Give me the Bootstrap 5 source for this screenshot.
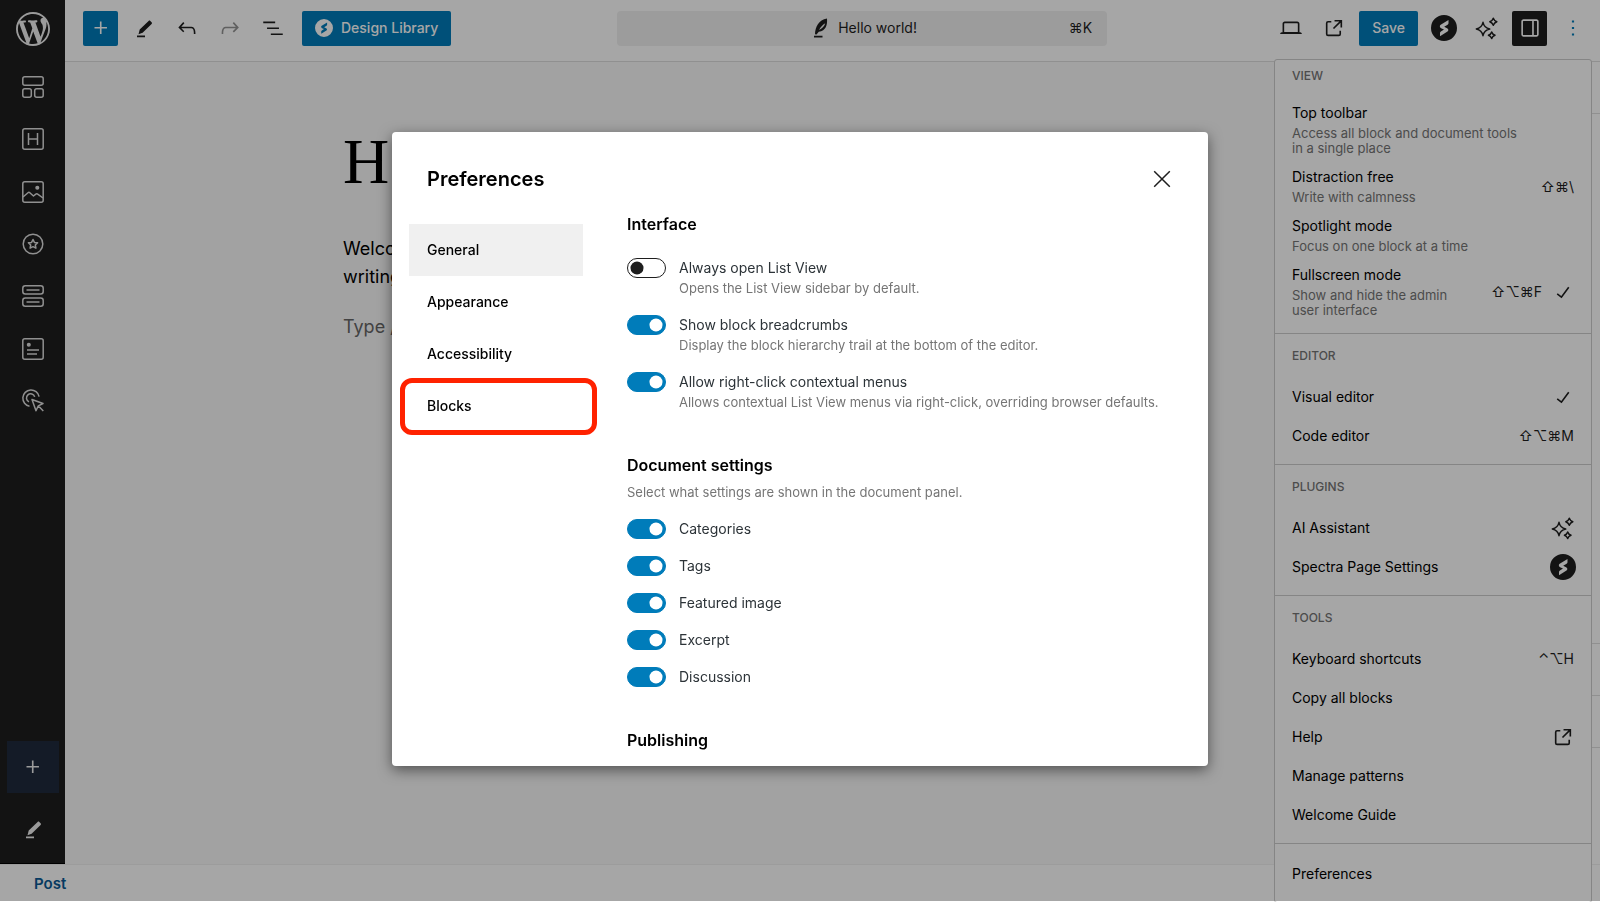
<!DOCTYPE html>
<html lang="en">
<head>
<meta charset="utf-8">
<meta name="viewport" content="width=device-width, initial-scale=1">
<title>Hello world! – Editor</title>
<link rel="stylesheet" href="https://cdn.jsdelivr.net/npm/bootstrap@5.3.0/dist/css/bootstrap.min.css">
<style>
  :root { --accent: #007cba; --ink: #1e1e1e; --line: #ddd; }
  body { font-family: Inter, "Liberation Sans", sans-serif; font-size: 14px; line-height: 20px; color: #000; overflow: hidden; }
  svg { fill: currentColor; flex: none; display: block; }
  .ico { width: 26px; height: 26px; }
  .stroked { fill: none; stroke: currentColor; stroke-width: 1.5; stroke-linejoin: round; }
  .plain { border: 0; background: none; padding: 0; color: var(--ink); display: flex; align-items: center; justify-content: center; }

  /* left rail */
  .workspace { min-height: 0; }
  .rail { width: 65px; background: var(--ink); border-bottom: 1px solid #000; }
  .rail .plain { color: #eee; width: 52px; }
  .rail .logo { height: 61px; padding-bottom: 4px; }
  .rail-tools { height: 366px; }
  .rail-tools .plain { flex: 1; color: #ddd; }
  .rail .add { height: 52px; background: #1f2a3d; }
  .rail .draw { height: 70px; padding-top: 2px; }

  /* top bar */
  .topbar { height: 62px; border-bottom: 1px solid var(--line); padding: 0 10px 5px 18px; }
  .topbar .plain { width: 35px; height: 35px; border-radius: 2px; }
  .topbar .fill { background: var(--accent); color: #fff; }
  .topbar .fill.wide { width: auto; font-weight: 500; padding: 0 13px; }
  .topbar .dark { background: var(--ink); color: #fff; }
  .topbar .off { color: #949494; }
  .topbar .more { color: var(--accent); }
  .command { width: 490px; height: 35px; background: #f0f0f0; border-radius: 4px; padding: 0 15px; border: 0; color: var(--ink); }

  /* canvas */
  .canvas { background: #f9f9f9; padding: 64px 278px 0; }
  .canvas h1 { font: 400 64px/72px "Liberation Serif", serif; margin: 0 0 37px; }
  .canvas p { font-size: 18px; line-height: 28px; margin: 0 0 22px; }
  .canvas .hint { color: #666; }
  .settings { width: 306px; border-left: 1px solid var(--line); }
  .settings div { border-bottom: 1px solid var(--line); height: 52px; }
  .settings .tall { height: 530px; }
  .crumbs { height: 38px; border-top: 1px solid #f0f0f0; padding: 0 34px; }
  .crumbs a { color: #0a5a96; font-weight: 600; font-size: 15px; text-decoration: none; }

  /* options menu */
  .options { position: absolute; top: 59px; right: 8px; width: 318px; background: #fff; border: 1px solid #ccc; border-radius: 3px; }
  .options section { padding: 9px 0; border-bottom: 1px solid #ccc; }
  .options section:first-child { padding-top: 3px; }
  .options section:last-child { border: 0; padding-top: 10px; }
  .options h2 { font-size: 12px; font-weight: 500; line-height: 26px; margin: 0 0 8px; padding-left: 17px; color: #757575; }
  .options section:first-child h2 { margin-bottom: 9px; }
  .options button { width: 100%; min-height: 39px; border: 0; background: none; color: #000; padding: 0 17px; text-align: left; display: flex; align-items: center; gap: 8px; }
  .options .two { padding-top: 6px; padding-bottom: 6px; }
  .options .two b { display: block; font-size: 14px; font-weight: 400; line-height: 18px; margin-bottom: 4px; }
  .options .two span { display: block; font-size: 13px; line-height: 15px; }
  .options .two span span { color: #757575; }
  .options kbd { background: none; color: var(--ink); padding: 0; font: inherit; margin-left: auto; white-space: nowrap; }
  .options svg { margin: 0 -2px 0 auto; color: var(--ink); }
  .options kbd + svg { margin-left: 0; }
  .narrow { width: 170px; }

  /* preferences dialog */
  .modal-backdrop.dim { --bs-backdrop-opacity: .35; height: calc(100vh - 1px); }
  .prefs { max-width: 816px; height: calc(100vh - 268px); margin: 132px auto 0; }
  .prefs .modal-content { height: 100%; border: 0; border-radius: 4px; overflow: hidden; box-shadow: 0 4px 14px rgba(0,0,0,.5); }
  .prefs .modal-header { height: 80px; padding: 13px 33px 0 35px; border: 0; flex: none; }
  .prefs .modal-title { font-size: 20px; font-weight: 600; line-height: 24px; }
  .prefs .modal-body { padding: 0 40px 0 17px; display: flex; gap: 44px; overflow: hidden; }
  .tabs { width: 174px; margin-top: 12px; flex: none; }
  .tabs button { display: block; width: 100%; height: 52px; border: 0; background: none; color: #000; text-align: left; padding: 0 18px; font-weight: 500; position: relative; }
  .tabs .active { background: #f0f0f0; }
  .tabs .marked::after { content: ""; position: absolute; inset: -2px -14px -3px -9px; border: 5px solid #ff2200; border-radius: 12px; }
  .panel h2 { font-size: 16px; font-weight: 600; line-height: 24px; margin: 0; }
  .panel section { margin-bottom: 41px; }
  .panel .note { color: #757575; font-size: 13px; line-height: 20px; margin: 0; }
  .panel .form-switch { min-height: 0; margin: 0 0 17px; padding-left: 52px; color: #2c3338; }
  .panel .first { margin-top: 22px; }
  .panel h2 + .note { margin: 5px 0 17px; }
  .panel .form-switch .form-check-input { width: 39px; height: 20px; margin: 0 0 0 -52px; border-color: var(--ink);
    background-image: url("data:image/svg+xml,%3csvg xmlns='http://www.w3.org/2000/svg' viewBox='-4 -4 8 8'%3e%3ccircle r='2.9' fill='%231e1e1e'/%3e%3c/svg%3e"); }
  .panel .form-switch .form-check-input:checked { background-color: var(--accent); border-color: var(--accent);
    background-image: url("data:image/svg+xml,%3csvg xmlns='http://www.w3.org/2000/svg' viewBox='-4 -4 8 8'%3e%3ccircle r='2.9' fill='%23fff'/%3e%3c/svg%3e"); }
</style>
</head>
<body class="vh-100 d-flex flex-column">

<svg width="0" height="0" class="position-absolute" aria-hidden="true">
  <symbol id="plus" viewBox="0 0 24 24"><path d="M11 12.5V17.5H12.5V12.5H17.5V11H12.5V6H11V11H6V12.5H11Z"/></symbol>
  <symbol id="pencil" viewBox="0 0 26 26"><path d="M7.5 19.2l1.2-4.6 8.900-8.700c.6-.5 1.200-.5 1.700 0l1.300 1.300c.5.5.5 1.200 0 1.700l-9 8.800zM6 20.600h8v1.600H6z"/></symbol>
  <symbol id="external" viewBox="0 0 24 24"><path d="M19.500 4.500h-7V6h4.440l-5.970 5.970 1.060 1.060L18 7.060v4.440h1.500v-7Zm-13 1a2 2 0 0 0-2 2v10a2 2 0 0 0 2 2h10a2 2 0 0 0 2-2v-3H17v3a.5.5 0 0 1-.5.5h-10a.5.5 0 0 1-.5-.5v-10a.5.5 0 0 1 .5-.5h3V5.500h-3Z"/></symbol>
  <symbol id="check" viewBox="0 0 24 24"><path d="M16.700 7.100l-6.300 8.500-3.300-2.500-.9 1.200 4.500 3.400L17.900 8z"/></symbol>
  <symbol id="spectra" viewBox="0 0 26 26"><path fill-rule="evenodd" d="M13 0a13 13 0 1 0 0 26a13 13 0 1 0 0-26zM17.500 5v3.200c0 .7-.3 1.100-.9 1.500l-3.400 2.100 2.900 1.400c1.500.8 1.700 2.400.4 3.400L9 21.300v-3.200c0-.7.3-1.100.9-1.500l3.100-2-2.900-1.400c-1.500-.8-1.700-2.400-.4-3.400z"/></symbol>
  <symbol id="sparkle" viewBox="0 0 26 26"><g fill="none" stroke="currentColor" stroke-width="1.500" stroke-linejoin="round"><path d="M9 7.300q1.200 5.500 6.700 6.700q-5.500 1.200-6.700 6.700q-1.200-5.500-6.700-6.700q5.500-1.200 6.700-6.700z"/><path d="M19.300 3.200q.9 2.600 3.500 3.500q-2.600.9-3.500 3.500q-.9-2.600-3.500-3.500q2.600-.9 3.500-3.500zM17.700 17q.8 2.500 3.300 3.300q-2.500.8-3.300 3.300q-.8-2.500-3.300-3.300q2.500-.8 3.300-3.300z"/></g></symbol>
</svg>

<div class="workspace d-flex flex-fill">
  <nav class="rail d-flex flex-column align-items-center" aria-label="Block tools">
    <button class="plain logo" aria-label="Dashboard"><svg width="34" height="34" viewBox="0 0 20 20"><path d="M20 10c0-5.510-4.490-10-10-10C4.480 0 0 4.490 0 10c0 5.520 4.480 10 10 10 5.510 0 10-4.480 10-10zM7.780 15.370L4.370 6.220c.55-.02 1.170-.08 1.170-.08.5-.06.44-1.130-.06-1.110 0 0-1.450.11-2.370.11-.18 0-.37 0-.58-.01C4.120 2.690 6.870 1.110 10 1.110c2.330 0 4.450.87 6.050 2.340-.68-.11-1.650.39-1.650 1.580 0 .74.45 1.360.9 2.100.35.61.55 1.360.55 2.460 0 1.490-1.400 5-1.400 5l-3.030-8.370c.54-.02.82-.17.82-.17.5-.05.44-1.250-.06-1.220 0 0-1.440.12-2.380.12-.87 0-2.330-.12-2.330-.12-.5-.03-.56 1.200-.06 1.220l.92.08 1.260 3.410zM17.410 10c.24-.64.74-1.870.43-4.250.7 1.290 1.050 2.710 1.050 4.250 0 3.290-1.730 6.240-4.400 7.780.97-2.590 1.940-5.200 2.920-7.780zM6.100 18.090C3.120 16.650 1.110 13.530 1.110 10c0-1.300.23-2.480.72-3.590C3.250 10.300 4.670 14.200 6.100 18.090zm4.030-6.630l2.580 6.980c-.86.29-1.760.45-2.710.45-.79 0-1.570-.11-2.290-.33.81-2.380 1.620-4.740 2.420-7.100z"/></svg></button>
    <div class="rail-tools d-flex flex-column">
      <button class="plain" aria-label="Container"><svg class="ico stroked" viewBox="0 0 26 26"><rect x="2.800" y="2.800" width="20.400" height="8.500" rx="2"/><rect x="2.800" y="14.800" width="8.500" height="8.500" rx="2"/><rect x="14.700" y="14.800" width="8.500" height="8.500" rx="2"/></svg></button>
      <button class="plain" aria-label="Heading"><svg class="ico stroked" viewBox="0 0 26 26"><rect x="2.800" y="2.800" width="20.400" height="20.400" rx="2"/><path d="M8.500 7v12M17.500 7v12M8.500 13h9"/></svg></button>
      <button class="plain" aria-label="Image"><svg class="ico stroked" viewBox="0 0 26 26"><rect x="2.800" y="2.800" width="20.400" height="20.400" rx="2"/><path d="M3 18l5-4.300c.6-.5 1.200-.5 1.800 0l3.700 3.300 2.300-1.800c.7-.5 1.300-.5 1.900 0L23 19"/><circle cx="17.300" cy="8.700" r="1.300" fill="currentColor"/></svg></button>
      <button class="plain" aria-label="Icon"><svg class="ico stroked" viewBox="0 0 26 26"><circle cx="13" cy="13" r="9.800"/><path d="M13 8.500l1.400 2.900 3.200.4-2.300 2.200.6 3.200-2.900-1.500-2.900 1.500.6-3.200-2.300-2.200 3.200-.4z"/></svg></button>
      <button class="plain" aria-label="Buttons"><svg class="ico stroked" viewBox="0 0 26 26"><rect x="2.800" y="2.800" width="20.400" height="8.300" rx="2.500"/><rect x="2.800" y="14.900" width="20.400" height="8.300" rx="2.500"/><path d="M6.500 7h13M6.500 19h13"/></svg></button>
      <button class="plain" aria-label="Info box"><svg class="ico stroked" viewBox="0 0 26 26"><rect x="2.800" y="2.800" width="20.400" height="20.400" rx="2"/><circle cx="8.800" cy="8.800" r="1.300" fill="currentColor"/><path d="M7 14h12M7 18h10"/></svg></button>
      <button class="plain" aria-label="Call to action"><svg class="ico stroked" viewBox="0 0 26 26"><path d="M9.500 18.200a8.200 8.200 0 1 1 9.600-9.600M9 13.900a4.200 4.200 0 1 1 5.700-5M12 11.500l11 4-4.700 2.300-2.300 4.900zM18.500 18l4.800 5"/></svg></button>
    </div>
    <button class="plain add mt-auto" aria-label="Add block"><svg class="ico"><use href="#plus"/></svg></button>
    <button class="plain draw" aria-label="Edit"><svg class="ico"><use href="#pencil"/></svg></button>
  </nav>

  <div class="flex-fill d-flex flex-column">
    <header class="topbar d-flex align-items-center justify-content-between">
      <div class="d-flex align-items-center gap-2">
        <button class="plain fill" aria-label="Toggle block inserter"><svg class="ico"><use href="#plus"/></svg></button>
        <button class="plain" aria-label="Tools"><svg class="ico"><use href="#pencil"/></svg></button>
        <button class="plain" aria-label="Undo"><svg class="ico" viewBox="0 0 24 24"><path d="M18.300 11.700c-.6-.6-1.400-.9-2.300-.9H6.700l2.900-3.300-1.100-1-4.500 5L8.500 16l1-1-2.700-2.700H16c.5 0 .9.2 1.300.5 1 1 1 3.400 1 4.500v.3h1.500v-.2c0-1.500 0-4.300-1.500-5.700z"/></svg></button>
        <button class="plain off" aria-label="Redo"><svg class="ico" viewBox="0 0 24 24"><path d="M15.600 6.500l-1.100 1 2.900 3.300H8c-.9 0-1.700.3-2.300.9-1.400 1.500-1.400 4.200-1.400 5.600v.2h1.500v-.3c0-1.100 0-3.500 1-4.500.3-.3.7-.5 1.300-.5h9.200L14.500 15l1.100 1.100 4.600-4.600-4.600-5z"/></svg></button>
        <button class="plain" aria-label="Document overview"><svg class="ico" viewBox="0 0 24 24"><path d="M3 6h11v1.500H3V6Zm3.500 5.500h11V13h-11v-1.500ZM21 17H10v1.500h11V17Z"/></svg></button>
        <button class="plain fill wide gap-2 ms-1"><svg width="18" height="18"><use href="#spectra"/></svg>Design Library</button>
      </div>
      <button class="command d-flex align-items-center">
        <span class="flex-fill d-flex align-items-center justify-content-center gap-1 ps-4">
          <svg class="ico" viewBox="0 0 26 26"><path fill-rule="evenodd" d="M7 19.300C7.200 12 10.500 5 19 3.500c.5 6.500-1 12.300-8.200 13.300L8.500 19.500zM11 15c3.200-1.400 5.200-3.600 6.300-6.800-2.700 1.600-4.900 3.900-6.300 6.800zM6 20.800h8.500v1.600H6z"/></svg>Hello world!</span>
        <span>⌘K</span>
      </button>
      <div class="d-flex align-items-center gap-2">
        <button class="plain" aria-label="View"><svg class="ico" viewBox="0 0 24 24"><path d="M20.500 16h-.7V8c0-1.100-.9-2-2-2H6.200c-1.100 0-2 .9-2 2v8h-.7c-.8 0-1.500.7-1.500 1.500h20c0-.8-.7-1.500-1.500-1.500zM5.700 8c0-.3.2-.5.5-.5h11.600c.3 0 .5.2.5.5v7.600H5.700V8z"/></svg></button>
        <button class="plain" aria-label="View post"><svg class="ico"><use href="#external"/></svg></button>
        <button class="plain fill wide">Save</button>
        <button class="plain" aria-label="Spectra Page Settings"><svg class="ico"><use href="#spectra"/></svg></button>
        <button class="plain" aria-label="AI Assistant"><svg class="ico"><use href="#sparkle"/></svg></button>
        <button class="plain dark" aria-label="Settings"><svg class="ico" viewBox="0 0 24 24"><path d="M18 4H6c-1.100 0-2 .9-2 2v12c0 1.100.9 2 2 2h12c1.100 0 2-.9 2-2V6c0-1.100-.9-2-2-2zm-4 14.500H6c-.3 0-.5-.2-.5-.5V6c0-.3.2-.5.5-.5h8v13zm4.500-.5c0 .3-.2.5-.5.5h-2.500v-13H18c.3 0 .5.2.5.5v12z"/></svg></button>
        <button class="plain more" aria-label="Options"><svg class="ico" viewBox="0 0 24 24"><path d="M13 19h-2v-2h2v2zm0-6h-2v-2h2v2zm0-6h-2V5h2v2z"/></svg></button>
      </div>
    </header>
    <div class="d-flex flex-fill">
      <main class="canvas flex-fill">
        <h1>H</h1>
        <p>Welcome<br>writing</p>
        <p class="hint">Type /</p>
      </main>
      <aside class="settings bg-white"><div></div><div class="tall"></div><div></div><div></div></aside>
    </div>
  </div>
</div>
<footer class="crumbs d-flex align-items-center bg-white"><a href="#">Post</a></footer>

<div class="options" aria-label="Options">
  <section>
    <h2>VIEW</h2>
    <button class="two"><span><b>Top toolbar</b><span>Access all block and document tools<br>in a single place</span></span></button>
    <button class="two"><span><b>Distraction free</b><span>Write with calmness</span></span><kbd>⇧⌘\</kbd></button>
    <button class="two"><span><b>Spotlight mode</b><span>Focus on one block at a time</span></span></button>
    <button class="two"><span class="narrow"><b>Fullscreen mode</b><span>Show and hide the admin user interface</span></span><kbd>⇧⌥⌘F</kbd><svg class="ico"><use href="#check"/></svg></button>
  </section>
  <section>
    <h2>EDITOR</h2>
    <button>Visual editor<svg class="ico"><use href="#check"/></svg></button>
    <button>Code editor<kbd>⇧⌥⌘M</kbd></button>
  </section>
  <section>
    <h2>PLUGINS</h2>
    <button>AI Assistant<svg class="ico"><use href="#sparkle"/></svg></button>
    <button>Spectra Page Settings<svg class="ico"><use href="#spectra"/></svg></button>
  </section>
  <section>
    <h2>TOOLS</h2>
    <button>Keyboard shortcuts<kbd>⌃⌥H</kbd></button>
    <button>Copy all blocks</button>
    <button>Help<svg class="ico"><use href="#external"/></svg></button>
    <button>Manage patterns</button>
    <button>Welcome Guide</button>
  </section>
  <section><button>Preferences</button></section>
</div>

<div class="modal-backdrop dim show"></div>
<div class="modal d-block overflow-hidden" role="dialog" aria-labelledby="prefs-title">
  <div class="modal-dialog prefs">
    <div class="modal-content">
      <div class="modal-header">
        <h1 class="modal-title" id="prefs-title">Preferences</h1>
        <button class="plain" aria-label="Close"><svg class="ico stroked" viewBox="0 0 26 26"><path d="M5.200 5.200l15.600 15.600M20.800 5.200L5.200 20.800"/></svg></button>
      </div>
      <div class="modal-body">
        <div class="tabs">
          <button class="active">General</button>
          <button>Appearance</button>
          <button>Accessibility</button>
          <button class="marked">Blocks</button>
        </div>
        <div class="panel flex-fill">
          <section>
            <h2>Interface</h2>
            <div class="form-check form-switch first"><input class="form-check-input" type="checkbox" role="switch" id="s1"><label for="s1" class="d-block">Always open List View</label><p class="note">Opens the List View sidebar by default.</p></div>
            <div class="form-check form-switch"><input class="form-check-input" type="checkbox" role="switch" id="s2" checked><label for="s2" class="d-block">Show block breadcrumbs</label><p class="note">Display the block hierarchy trail at the bottom of the editor.</p></div>
            <div class="form-check form-switch"><input class="form-check-input" type="checkbox" role="switch" id="s3" checked><label for="s3" class="d-block">Allow right-click contextual menus</label><p class="note">Allows contextual List View menus via right-click, overriding browser defaults.</p></div>
          </section>
          <section>
            <h2>Document settings</h2>
            <p class="note">Select what settings are shown in the document panel.</p>
            <div class="form-check form-switch"><input class="form-check-input" type="checkbox" role="switch" id="s4" checked><label for="s4" class="d-block">Categories</label></div>
            <div class="form-check form-switch"><input class="form-check-input" type="checkbox" role="switch" id="s5" checked><label for="s5" class="d-block">Tags</label></div>
            <div class="form-check form-switch"><input class="form-check-input" type="checkbox" role="switch" id="s6" checked><label for="s6" class="d-block">Featured image</label></div>
            <div class="form-check form-switch"><input class="form-check-input" type="checkbox" role="switch" id="s7" checked><label for="s7" class="d-block">Excerpt</label></div>
            <div class="form-check form-switch"><input class="form-check-input" type="checkbox" role="switch" id="s8" checked><label for="s8" class="d-block">Discussion</label></div>
          </section>
          <section><h2>Publishing</h2></section>
        </div>
      </div>
    </div>
  </div>
</div>
<script src="https://cdn.jsdelivr.net/npm/bootstrap@5.3.0/dist/js/bootstrap.bundle.min.js"></script>
</body>
</html>
